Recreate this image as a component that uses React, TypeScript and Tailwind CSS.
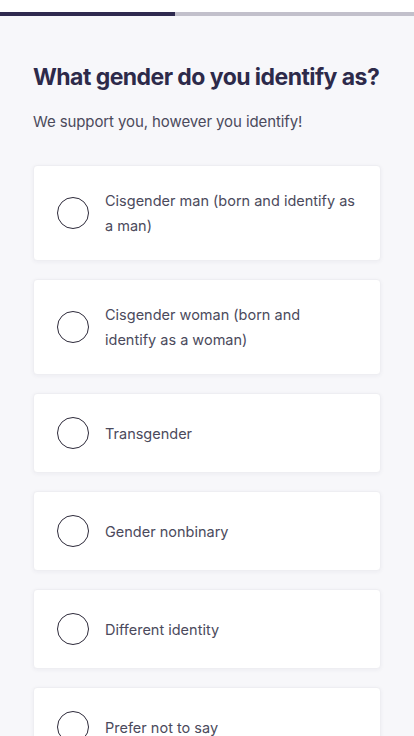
const options: React.ReactNode[] = [
  "Cisgender man (born and identify as a man)",
  <>
    Cisgender woman (born and
    <br />
    identify as a woman)
  </>,
  "Transgender",
  "Gender nonbinary",
  "Different identity",
  "Prefer not to say",
];

export default function App() {
  return (
    <div
      className="min-h-screen bg-[#f7f7fa] text-[#2d2a4a]"
      style={{ fontFamily: "Inter, 'Noto Sans', sans-serif" }}
    >
      {/* progress */}
      <div className="bg-white pt-[12px]">
        <div className="flex h-[4px] w-full bg-[#c2c0cb]">
          <div className="h-full w-[175px] bg-[#2f2a4f]" />
        </div>
      </div>

      <div className="px-[33px] pt-[45px]">
        <h1 className="whitespace-nowrap text-[23px] font-bold leading-[32px] tracking-[-0.55px] text-[#2d2a4a]">
          What gender do you identify as?
        </h1>
        <p className="mt-[17px] text-[15px] leading-[24px] tracking-[-0.1px] text-[#4b4a5c]">
          We support you, however you identify!
        </p>

        <div className="mt-[31px] flex flex-col gap-[18px]">
          {options.map((o, i) => (
            <label
              key={i}
              className="flex min-h-[80px] cursor-pointer items-center gap-[16px] rounded-[4px] border border-[#eeeef2] bg-white py-[22px] pl-[23px] pr-[24px] shadow-[0_1px_4px_rgba(40,40,70,0.05)]"
            >
              <span className="h-[32px] w-[32px] shrink-0 rounded-full border border-[#2d2a3a]" />
              <span className="text-[14.5px] leading-[25px] text-[#4b4a5c]">{o}</span>
            </label>
          ))}
        </div>
      </div>
    </div>
  );
}
